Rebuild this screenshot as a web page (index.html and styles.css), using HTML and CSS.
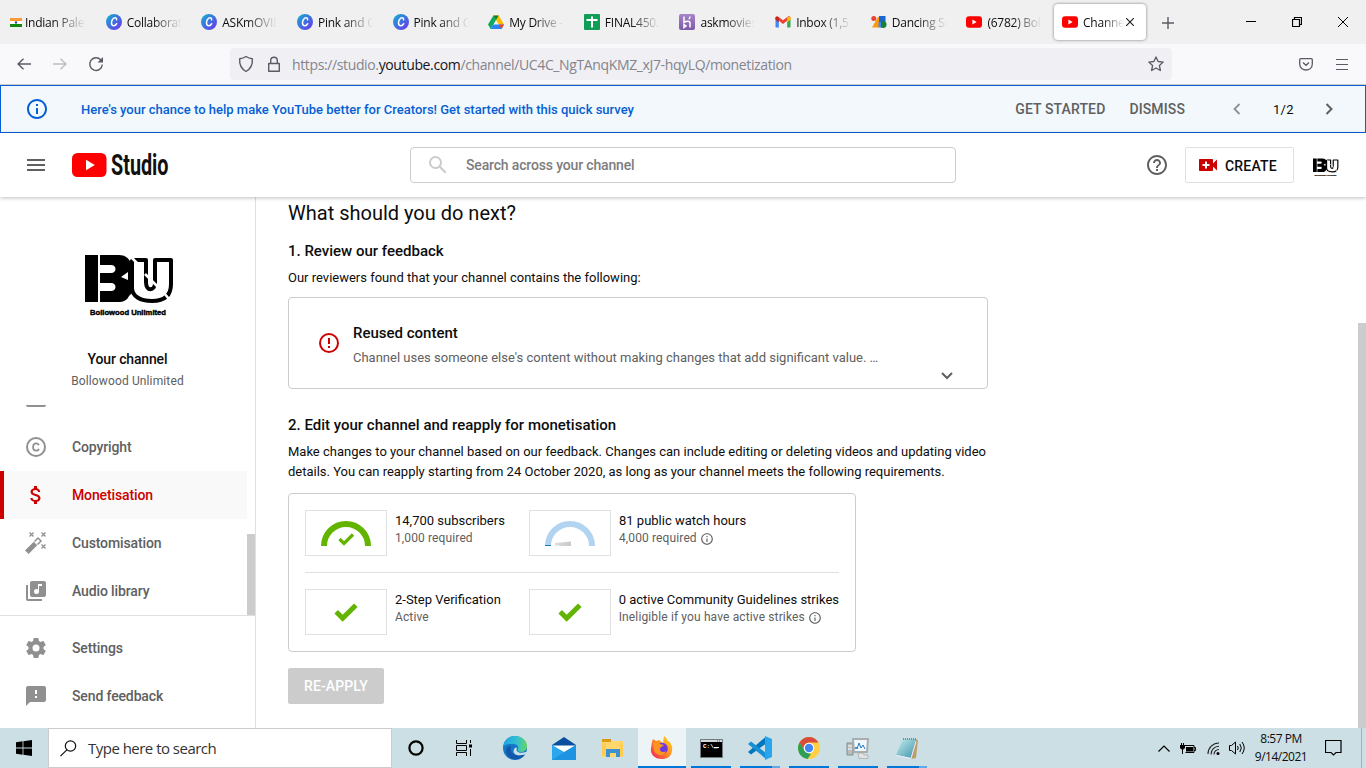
FILE: index.html
```html
<!DOCTYPE html>
<html lang="en">
<head>
<meta charset="utf-8">
<title>Channel monetisation - YouTube Studio</title>
<link rel="stylesheet" href="styles.css">
</head>
<body>
<svg class="defs" width="0" height="0">
  <defs>
    <linearGradient id="canva" x1="0" y1="0" x2="1" y2="1"><stop offset="0" stop-color="#12b5cc"/><stop offset=".5" stop-color="#3f6fe0"/><stop offset="1" stop-color="#7435e8"/></linearGradient>
    <linearGradient id="edge" x1="0" y1="0" x2="1" y2="0"><stop offset="0" stop-color="#1ba3e4"/><stop offset=".6" stop-color="#35c1d0"/><stop offset="1" stop-color="#66d85b"/></linearGradient>
    <linearGradient id="fire" x1="1" y1="0" x2="0" y2="1"><stop offset="0" stop-color="#ffe226"/><stop offset=".5" stop-color="#ff8a20"/><stop offset="1" stop-color="#f5156c"/></linearGradient>
    <linearGradient id="pad" x1="0" y1="0" x2="1" y2="1"><stop offset="0" stop-color="#c8eef3"/><stop offset="1" stop-color="#3d94a8"/></linearGradient>
    <linearGradient id="needle"><stop offset="0" stop-color="#dcdcdc"/><stop offset="1" stop-color="#c8c8c8"/></linearGradient>
    <linearGradient id="her" x1="0" y1="0" x2="0" y2="1"><stop offset="0" stop-color="#a785c9"/><stop offset="1" stop-color="#7d5aa6"/></linearGradient>
    <symbol id="i-canva" viewBox="0 0 16 16"><circle cx="8" cy="8" r="8" fill="url(#canva)"/><path d="M10.600 5.800c.2-1.200-.4-2-1.500-2C7.200 3.800 5.500 6.200 5.500 8.800c0 1.900.9 3 2.300 3 1.300 0 2.300-.9 2.900-2.100" fill="none" stroke="#fff" stroke-width="1.500" stroke-linecap="round"/></symbol>
    <symbol id="i-yt" viewBox="0 0 16 16"><rect y="2.300" width="16" height="11.400" rx="3" fill="#f00"/><path d="M6.400 5.500v5l4.200-2.500z" fill="#fff"/></symbol>
    <symbol id="i-info" viewBox="0 0 24 24"><path d="M11 17h2v-6h-2v6zm1-15C6.480 2 2 6.480 2 12s4.480 10 10 10 10-4.480 10-10S17.520 2 12 2zm0 18c-4.410 0-8-3.590-8-8s3.590-8 8-8 8 3.590 8 8-3.590 8-8 8zM11 9h2V7h-2v2z"/></symbol>
    <symbol id="i-check" viewBox="0 0 24 19"><path d="M2.200 8.800 8.700 15.200 21.800 2.200" fill="none" stroke="#62b400" stroke-width="5"/></symbol>
    <symbol id="i-bu" viewBox="0 0 90 64">
      <path d="M0 1h13v47H0zM15 1h19c6 0 9 3 11 6l3 4v27l-4 4c-2 4-5 6-11 6H15V37h11c6 0 6-8 0-8H15V19h11c6 0 6-8 0-8H15z"/>
      <path d="m36 23 7-5v8z" fill="#fff"/>
      <path d="M48 6h13v22c0 10 9 9 9 1V6h16v24c0 12-7 17-19 17S47 42 47 34V7z" fill="#fff" stroke="#000" stroke-width="4" stroke-linejoin="round"/>
      <path d="m45 2 7 7M60 20l13 13M79 39l5 6" stroke="#fff" stroke-width="2.600"/>
      <text x="5" y="61" textLength="76" lengthAdjust="spacingAndGlyphs" font-family="Liberation Sans, sans-serif" font-weight="700" font-size="7" stroke="#000" stroke-width=".4">Bollowood Unlimited</text>
    </symbol>
  </defs>
</svg>

<div class="tabs">
  <div class="tab first"><svg width="12" height="9" viewBox="0 0 12 9"><path fill="#f93" d="M0 0h12v3H0z"/><path fill="#fff" d="M0 3h12v3H0z"/><path fill="#138808" d="M0 6h12v3H0z"/><circle cx="6" cy="4.500" r="1.200" fill="#33489a"/></svg><span>Indian Palette</span></div>
  <div class="tab"><svg width="16" height="16"><use href="#i-canva"/></svg><span>Collaboration</span></div>
  <div class="tab"><svg width="16" height="16"><use href="#i-canva"/></svg><span>ASKmOVIES</span></div>
  <div class="tab"><svg width="16" height="16"><use href="#i-canva"/></svg><span>Pink and Cream</span></div>
  <div class="tab"><svg width="16" height="16"><use href="#i-canva"/></svg><span>Pink and Cream</span></div>
  <div class="tab"><svg width="16" height="16" viewBox="0 0 16 16"><path fill="#ffba00" d="M5.400 1.500h5.200L16 10.500h-5.200z"/><path fill="#0da960" d="M5.400 1.500 0 10.500 2.600 15 8 6z"/><path fill="#2684fc" d="M2.600 15 5.200 10.500H16L13.400 15z"/><path fill="#ea4335" d="M10.800 10.500H16l-2.600 4.500z"/><path fill="#00832d" d="m5.400 1.500 2.600 4.500 2.600-4.500z"/></svg><span>My Drive - Go</span></div>
  <div class="tab"><svg width="16" height="16" viewBox="0 0 16 16"><rect width="16" height="16" rx="1" fill="#0f9d58"/><path d="M2.500 6h11M8 2.500v11" stroke="#fff" stroke-width="2"/></svg><span>FINAL450.xls</span></div>
  <div class="tab"><svg width="16" height="16" viewBox="0 0 16 16"><rect width="16" height="16" rx="2" fill="url(#her)"/><path d="M5 2.500v6c2-1.300 6-2 6 .5v4.500M11 2.500c0 1-.4 2-1.200 2.700M5 10.500l2 1.500-2 1.500z" fill="none" stroke="#fff" stroke-width="1.500"/></svg><span>askmovies</span></div>
  <div class="tab"><svg width="16" height="16" viewBox="0 0 15 16"><path fill="#4285f4" d="M0 4h3.300v9.500H1c-.6 0-1-.4-1-1z"/><path fill="#34a853" d="M11.700 4H15v8.500c0 .6-.4 1-1 1h-2.300z"/><path fill="#ea4335" d="M0 4c0-1.700 1.800-2 2.800-1.300l4.700 3.500 4.700-3.500C13.200 2 15 2.300 15 4L7.500 10 0 4z"/><path fill="#fbbc04" d="m11.700 3.200 3.300-.5v3l-3.300 2.500z"/><path fill="#c5221f" d="m0 3 3.300.3v4.900L0 5.700z"/></svg><span>Inbox (1,531)</span></div>
  <div class="tab"><svg width="16" height="16" viewBox="0 0 16 16"><circle cx="2.800" cy="4.500" r="2.500" fill="#ea4335"/><path fill="#fb9a04" d="M1 13.500 7 3h1v10.500z"/><path fill="#1967d2" d="M8 2h6.500v6H8z"/><circle cx="12" cy="10.500" r="3.500" fill="#188038"/><path fill="#4285f4" d="M7.500 8h2.500v5.500H7.500z"/></svg><span>Dancing Script</span></div>
  <div class="tab"><svg width="16" height="16"><use href="#i-yt"/></svg><span>(6782) Bollywood</span></div>
  <div class="tab active"><svg width="16" height="16"><use href="#i-yt"/></svg><span>Channel mon</span><svg class="close" width="8" height="8" viewBox="0 0 8 8"><path d="m0 0 8 8M8 0 0 8" stroke="#222" stroke-width="1.200"/></svg></div>
  <svg class="plus" width="12" height="12" viewBox="0 0 12 12"><path d="M6 0v12M0 6h12" stroke="#5b5b66" stroke-width="1.400"/></svg>
  <div class="winbtns">
    <svg width="10" height="10"><path d="M0 4.500h10" stroke="#000"/></svg>
    <svg width="10" height="10"><path d="M.5 2.500h7v7h-7zM2.500 2.500v-2h7v7h-2" fill="none" stroke="#000" stroke-width="1.200"/></svg>
    <svg width="10" height="10"><path d="m0 0 10 10M10 0 0 10" stroke="#000"/></svg>
  </div>
</div>

<div class="toolbar">
  <svg class="nav" width="14" height="12" viewBox="0 0 14 12"><path d="M6.500.8 1 6l5.500 5.200M1 6h13" fill="none" stroke="#5b5b66" stroke-width="1.400"/></svg>
  <svg class="nav" width="14" height="12" viewBox="0 0 14 12"><path d="M7.500.8 13 6l-5.500 5.200M13 6H0" fill="none" stroke="#bdbdc3" stroke-width="1.400"/></svg>
  <svg class="nav reload" width="16" height="16" viewBox="0 0 16 16"><path d="M12.800 4A6.300 6.300 0 1 0 14.300 8.500" fill="none" stroke="#5b5b66" stroke-width="1.400"/><path d="M15 1v5.500H9.500z" fill="#5b5b66"/></svg>
  <div class="url">
    <svg width="16" height="18" viewBox="0 0 16 18"><path d="M8 1.500c2 1.300 4 2 6.300 2.300.5 5.500-1 9.700-6.300 12.700C2.700 13.500 1.200 9.300 1.700 3.800 4 3.500 6 2.800 8 1.500z" fill="none" stroke="#5b5b66" stroke-width="1.400" stroke-linejoin="round"/></svg>
    <svg width="12" height="16" viewBox="0 0 12 16"><path d="M.7 7.500h10.600v7.800H.7zM2.700 7.500v-3a3.300 3.300 0 0 1 6.600 0v3" fill="none" stroke="#5b5b66" stroke-width="1.400" stroke-linejoin="round"/></svg>
    <p>https://studio.<b>youtube.com</b>/channel/UC4C_NgTAnqKMZ_xJ7-hqyLQ/monetization</p>
    <svg width="16" height="16" viewBox="0 0 16 16"><path d="m8 .9 2.100 4.600 5.100.6-3.800 3.400 1 5L8 12l-4.400 2.500 1-5L.8 6.100l5.100-.6z" fill="none" stroke="#5b5b66" stroke-width="1.300" stroke-linejoin="round"/></svg>
  </div>
  <svg class="pocket" width="14" height="13" viewBox="0 0 14 13"><path d="M1.700.7h10.600c.6 0 1 .4 1 1V6c0 8-12.600 8-12.600 0V1.700c0-.6.4-1 1-1zM4 4.500l3 2.800 3-2.800" fill="none" stroke="#5b5b66" stroke-width="1.300"/></svg>
  <svg width="12" height="11" viewBox="0 0 12 11"><path d="M0 .5h12M0 5.500h12M0 10.500h12" stroke="#5b5b66" stroke-width="1.200"/></svg>
</div>

<div class="banner">
  <svg class="binfo" width="24" height="24" fill="#065fd4"><use href="#i-info"/></svg>
  <p>Here's your chance to help make YouTube better for Creators! Get started with this quick survey</p>
  <a class="get">GET STARTED</a><a class="dismiss">DISMISS</a>
  <svg width="8" height="12" viewBox="0 0 8 12"><path d="M6.500 1 1.500 6l5 5" fill="none" stroke="#909090" stroke-width="1.800"/></svg>
  <span>1/2</span>
  <svg width="8" height="12" viewBox="0 0 8 12"><path d="m1.500 1 5 5-5 5" fill="none" stroke="#606060" stroke-width="2"/></svg>
</div>

<header class="header">
  <svg width="18" height="12" viewBox="0 0 18 12"><path d="M0 1h18M0 6h18M0 11h18" stroke="#606060" stroke-width="2"/></svg>
  <svg class="logo" width="98" height="28" viewBox="0 0 98 28"><rect y="2" width="34.500" height="24" rx="5.500" fill="#f00"/><path d="M14 8.800v10.400l8.800-5.200z" fill="#fff"/><text x="39" y="24" textLength="57.500" lengthAdjust="spacingAndGlyphs" font-family="Roboto, sans-serif" font-weight="700" font-size="29" fill="#111">Studio</text></svg>
  <div class="search"><svg width="24" height="24" viewBox="0 0 24 24"><path fill="#ccc" d="M20.490 19l-5.730-5.730C15.530 12.200 16 10.910 16 9.500A6.500 6.500 0 1 0 9.500 16c1.410 0 2.700-.47 3.770-1.240L19 20.490 20.490 19zM5 9.500C5 7.010 7.010 5 9.500 5S14 7.010 14 9.500 11.990 14 9.500 14 5 11.990 5 9.500z"/></svg><span>Search across your channel</span></div>
  <svg class="help" width="24" height="24" viewBox="0 0 24 24"><path fill="#606060" d="M11 18h2v-2h-2v2zm1-16C6.480 2 2 6.480 2 12s4.480 10 10 10 10-4.480 10-10S17.520 2 12 2zm0 18c-4.410 0-8-3.590-8-8s3.590-8 8-8 8 3.590 8 8-3.590 8-8 8zm0-14c-2.210 0-4 1.790-4 4h2c0-1.100.9-2 2-2s2 .9 2 2c0 2-3 1.750-3 5h2c0-2.250 3-2.500 3-5 0-2.210-1.790-4-4-4z"/></svg>
  <div class="create"><svg width="18" height="12" viewBox="0 0 18 12"><path fill="#c00" d="M1 0h12c.6 0 1 .4 1 1v3.500L18 .5v11l-4-4V11c0 .6-.4 1-1 1H1c-.6 0-1-.4-1-1V1c0-.6.4-1 1-1z"/><path d="M7 2.500v7M3.500 6h7" stroke="#fff" stroke-width="2"/></svg><span>CREATE</span></div>
  <svg class="avatar" width="26" height="19"><use href="#i-bu"/></svg>
</header>

<div class="body">
  <nav class="side">
    <div class="channel">
      <svg width="90" height="64"><use href="#i-bu"/></svg>
      <strong>Your channel</strong>
      <span>Bollowood Unlimited</span>
    </div>
    <div class="cut"></div>
    <div class="item"><svg width="24" height="24" viewBox="0 0 24 24"><circle cx="12" cy="12" r="9" fill="none" stroke="#909090" stroke-width="2"/><path d="M14.800 10.300c-.3-1.300-1.300-2-2.700-2-1.900 0-3 1.400-3 3.700s1.100 3.700 3 3.700c1.400 0 2.400-.7 2.700-2" fill="none" stroke="#909090" stroke-width="1.800"/></svg>Copyright</div>
    <div class="item on"><svg width="24" height="24" viewBox="0 0 24 24"><path fill="#c00" d="M11.800 10.900c-2.270-.59-3-1.200-3-2.150 0-1.090 1.010-1.850 2.700-1.850 1.780 0 2.440.85 2.500 2.100h2.210c-.07-1.720-1.120-3.300-3.210-3.810V3h-3v2.160c-1.940.42-3.500 1.680-3.500 3.610 0 2.310 1.910 3.460 4.700 4.130 2.500.6 3 1.480 3 2.410 0 .69-.49 1.790-2.700 1.790-2.060 0-2.870-.92-2.980-2.100H6.320c.12 2.190 1.760 3.420 3.680 3.830V21h3v-2.150c1.950-.37 3.500-1.500 3.500-3.550 0-2.840-2.430-3.810-4.700-4.400z"/></svg>Monetisation</div>
    <div class="item"><svg width="24" height="24" viewBox="0 0 24 24"><path d="M2.800 21.200 11.500 12.500" stroke="#909090" stroke-width="5"/><path d="m10.500 10.500 3.500-3.500 3 3-3.500 3.500" fill="none" stroke="#909090" stroke-width="1.500"/><path d="m5.500 1.500 4 4m0-4-4 4m12-4 4 4m0-4-4 4m0 8 4 4m0-4-4 4" stroke="#909090" stroke-width="1.300"/></svg>Customisation</div>
    <div class="item"><svg width="24" height="24" viewBox="0 0 24 24"><path fill="#909090" d="M20 2H8c-1.100 0-2 .9-2 2v12c0 1.100.9 2 2 2h12c1.100 0 2-.9 2-2V4c0-1.100-.9-2-2-2zm-2 5h-3v5.500a2.500 2.500 0 1 1-2.500-2.500c.57 0 1.080.19 1.500.51V5h4v2zM4 6H2v14c0 1.100.9 2 2 2h14v-2H4V6z"/></svg>Audio library</div>
    <div class="foot">
    <div class="item"><svg width="24" height="24" viewBox="0 0 24 24"><path fill="#909090" fill-rule="evenodd" d="M19.430 12.980c.04-.32.070-.64.070-.98s-.03-.66-.07-.98l2.110-1.650c.19-.15.240-.42.120-.64l-2-3.460c-.12-.22-.39-.3-.61-.22l-2.490 1c-.52-.4-1.080-.73-1.690-.98l-.38-2.650C14.460 2.180 14.250 2 14 2h-4c-.25 0-.46.180-.49.42l-.38 2.650c-.61.25-1.170.59-1.690.98l-2.490-1c-.23-.09-.49 0-.61.22l-2 3.460c-.13.22-.07.49.120.64l2.110 1.650c-.04.32-.07.650-.07.98s.03.660.070.980l-2.110 1.650c-.19.150-.24.420-.12.640l2 3.460c.12.220.39.300.61.220l2.490-1c.52.400 1.080.730 1.690.980l.38 2.650c.03.240.24.420.49.420h4c.25 0 .46-.18.490-.42l.38-2.650c.61-.25 1.170-.59 1.690-.98l2.490 1c.23.090.49 0 .61-.22l2-3.460c.12-.22.070-.49-.12-.64l-2.110-1.650zM12 15.500a3.500 3.500 0 1 1 0-7 3.500 3.500 0 0 1 0 7z"/></svg>Settings</div>
    <div class="item"><svg width="24" height="24" viewBox="0 0 24 24"><path fill="#909090" d="M20 2H4c-1.100 0-2 .9-2 2v18l4-4h14c1.100 0 2-.9 2-2V4c0-1.100-.9-2-2-2zm-7 12h-2v-2h2v2zm0-4h-2V6h2v4z"/></svg>Send feedback</div>
    </div>
    <div class="sidescroll"></div>
  </nav>
  <main class="main">
    <h1>What should you do next?</h1>
    <h2>1. Review our feedback</h2>
    <p class="intro">Our reviewers found that your channel contains the following:</p>
    <section class="reused">
      <svg width="24" height="24" viewBox="0 0 24 24"><circle cx="12" cy="12" r="9" fill="none" stroke="#c00" stroke-width="2"/><path d="M12 7v6M12 15v2" stroke="#c00" stroke-width="2"/></svg>
      <div><h3>Reused content</h3><p>Channel uses someone else's content without making changes that add significant value. …</p></div>
      <svg class="chev" width="12" height="8" viewBox="0 0 12 8"><path d="m1 1 5 5 5-5" fill="none" stroke="#606060" stroke-width="2"/></svg>
    </section>
    <h2 class="second">2. Edit your channel and reapply for monetisation</h2>
    <p class="para">Make changes to your channel based on our feedback. Changes can include editing or deleting videos and updating video<br><span>details. You can reapply starting from 24 October 2020, as long as your channel meets the following requirements.</span></p>
    <section class="reqs">
      <div class="row">
        <div class="box"><svg width="50" height="25" viewBox="0 0 50 25"><path d="M3 25a22 22 0 0 1 44 0" fill="none" stroke="#62b400" stroke-width="6"/><path d="m18.500 18 4.500 4.500 9-9" fill="none" stroke="#62b400" stroke-width="3.200"/></svg></div>
        <div class="label l1"><b>14,700 subscribers</b><i>1,000 required</i></div>
        <div class="box"><svg width="50" height="25" viewBox="0 0 50 25"><path d="M3 25a22 22 0 0 1 44 0" fill="none" stroke="#b2d4f0" stroke-width="6"/><path d="M0 24.500h6" stroke="#167ac6"/><path d="M10 22 26 20.500v5.500l-16-1.700z" fill="url(#needle)"/></svg></div>
        <div class="label"><b>81 public watch hours</b><i>4,000 required<svg width="14" height="14" fill="#606060"><use href="#i-info"/></svg></i></div>
      </div>
      <div class="row">
        <div class="box"><svg width="24" height="19"><use href="#i-check"/></svg></div>
        <div class="label l1"><b>2-Step Verification</b><i>Active</i></div>
        <div class="box"><svg width="24" height="19"><use href="#i-check"/></svg></div>
        <div class="label"><b>0 active Community Guidelines strikes</b><i class="wide">Ineligible if you have active strikes<svg width="14" height="14" fill="#606060"><use href="#i-info"/></svg></i></div>
      </div>
    </section>
    <div class="reapply">RE-APPLY</div>
  </main>
  <div class="pagescroll"></div>
</div>

<footer class="taskbar">
  <div class="start"><svg width="16" height="16" viewBox="0 0 16 16"><path d="M0 2.200 6.600 1.300v6.300H0zM7.400 1.200 16 0v7.600H7.400zM0 8.400h6.600v6.300L0 13.800zM7.400 8.400H16V16l-8.600-1.200z"/></svg></div>
  <div class="tsearch"><svg width="17" height="17" viewBox="0 0 17 17"><circle cx="10.500" cy="6" r="5.200" fill="none" stroke="#111" stroke-width="1.200"/><path d="M6.800 9.800.5 16.200" stroke="#111" stroke-width="1.200"/></svg><span>Type here to search</span></div>
  <div class="sys"><svg width="16" height="16"><circle cx="8" cy="8" r="6.600" fill="none" stroke="#000" stroke-width="2.200"/></svg></div>
  <div class="sys"><svg width="16" height="16"><path d="M.5 0v3.500h10V0M.5 16v-3.500h10V16M.5 5.500h10v5H.5zM14.500 0v3M14.500 9v7" fill="none" stroke="#000"/><path d="M13 4.500h3v3h-3z"/></svg></div>
  <div class="apps">
    <div class="app"><svg width="24" height="24" viewBox="0 0 24 24"><circle cx="12" cy="12" r="12" fill="#1478c9"/><path d="M0 11C1 4 6 0 12 0c7 0 12 5 12 10 0 4-3 6-6 6-3 0-4-1-3-3 1-3-1-5-5-5-4 0-8 0-10 3z" fill="url(#edge)"/><path d="M8 10c-2 8 5 12 14 8-4 7-16 8-19-2C3 12 5 10 8 10z" fill="#1257a8"/><path d="M14 12c-2 4 3 6 9 4l1 1-2 1.500c-7 2-13 0-11-5 .6-1.500 2-2.500 3-1.500z" fill="#cbdfe5"/></svg></div>
    <div class="app"><svg width="24" height="23" viewBox="0 0 24 23"><path d="M0 8 12 0l12 8v4H0z" fill="#0a4f9e"/><path d="M1 8.500h22v5L12 17 1 13.500z" fill="#fff"/><path d="M0 8v15h24V8L12 15z" fill="#2ba8ed"/><path d="m0 23 24-15v15z" fill="#1d93e2"/></svg></div>
    <div class="app"><svg width="22" height="20" viewBox="0 0 22 20"><path d="M0 1h8l2 2h11v16H0z" fill="#ffd76b"/><path d="M0 1h9v3H0z" fill="#dc9b12"/><path d="M4 19v-8h14v8h-4v-4H8v4z" fill="#3c91ce"/><path d="M0 5h4v13H0zM18 5h3v13h-3z" fill="#ffcd52"/></svg></div>
    <div class="app current"><svg width="24" height="24" viewBox="0 0 24 24"><path d="M2 6 3 3l3 2 3-1 4 3 1-7c2 1 3 3 4 5 3 1 5 6 4 10-1 6-5 8-10 8C4 23 0 18 1 12z" fill="url(#fire)"/><circle cx="12" cy="12.500" r="5.800" fill="#7038dc"/><path d="M3 7c4-2 6-1 7 1l4 1-4 3c-1 4 4 5 6 3-1 6-11 5-12-1z" fill="#ff9420"/></svg></div>
    <div class="app run"><svg width="23" height="19" viewBox="0 0 23 19"><path d="M.5.500h22v18H.5z" fill="#000" stroke="#737b80"/><path d="M1 1h21v2H1z" fill="#d3d8da"/><path d="M17 2h1M19 2h1" stroke="#555"/><text x="3" y="9" font-family="Liberation Mono, monospace" font-weight="700" font-size="6" fill="#fff">C:\_</text><path d="M14 8.500h5" stroke="#fff"/></svg></div>
    <div class="app run more"><svg width="24" height="24" viewBox="0 0 24 24"><path d="M17.500 1v7L3 18.500 0 16z" fill="#0076bd"/><path d="M0 8 3 5.500 18 17v6z" fill="#168fd6"/><path d="m17 0 7 3v18l-7 3z" fill="#29a5ed"/></svg></div>
    <div class="app run"><svg width="24" height="24" viewBox="0 0 24 24"><circle cx="12" cy="12" r="11" fill="#ffcf43"/><path d="M2.500 6.500A11 11 0 0 1 21.500 6.500H12A5.500 5.500 0 0 0 7 14z" fill="#d84b3d"/><path d="M2.500 6.500 8 15l4 2.500 2 .5-3.500 5A11 11 0 0 1 2.500 6.500z" fill="#2f9f56"/><circle cx="12" cy="12" r="5.300" fill="#fff"/><circle cx="12" cy="12" r="4.200" fill="#4285f4"/></svg></div>
    <div class="app run"><svg width="24" height="21" viewBox="0 0 24 21"><path d="M1 5h6v12H1z" fill="#b9bdbd" stroke="#858b8b"/><path d="M2 8h4M2 11h4" stroke="#fff"/><path d="M7 1h15l-1 13H8z" fill="#eff9ff" stroke="#a9adad" stroke-width="2"/><path d="M9 11l1-2 1 2 2-6 2 5 2-3 2 4" fill="none" stroke="#267bc2"/><path d="M12 15h5l1 2h4v3.500h-9z" fill="#e2e3e0" stroke="#a5a8a5" stroke-width=".7"/></svg></div>
    <div class="app run more"><svg width="24" height="23" viewBox="0 0 24 23"><path d="m20 2 3 1-2 18-5 1z" fill="#bd9e66"/><path d="M8 2h13l-5 19-15-3z" fill="url(#pad)"/><path d="m1 18.500 15 3 5-17" fill="none" stroke="#eef" stroke-width="1"/><path d="M8 2h13" stroke="#888" stroke-dasharray="1 1" stroke-width="2"/></svg></div>
  </div>
  <div class="tray">
    <svg class="up" width="12" height="7" viewBox="0 0 12 7"><path d="m.5 6.500 5.500-5.500 5.500 5.500" fill="none" stroke="#000" stroke-width="1.200"/></svg>
    <svg class="battery" width="16" height="11" viewBox="0 0 16 11"><path d="M4.500 2.500h9.500v7H5.500M14 4.500h1.500v3H14" fill="none" stroke="#000"/><path d="M6 4h7v4.500H6zM0 2h5v3.500H4L3 7H2L1 5.500H0zM1 0h1v2H1zM3 0h1v2H3zM2 6h1v5H2z"/></svg>
    <svg class="wifi" width="14" height="13" viewBox="0 0 14 13"><path d="M1 12A11 11 0 0 1 12 1M4 12.500A8 8 0 0 1 12 4.300M7 12.500a5 5 0 0 1 5-5" fill="none" stroke="#222" stroke-width="1.100"/><circle cx="11" cy="11.500" r="1.500"/></svg>
    <svg class="sound" width="17" height="14" viewBox="0 0 17 14"><path d="M.5 4.500h2l4-3.500v12l-4-3.500h-2zM8.500 5q1.500 2 0 4M10.800 3q3 4 0 8M13 1q4.500 6 0 12" fill="none" stroke="#000"/></svg>
    <div class="clock"><span>8:57 PM</span><span>9/14/2021</span></div>
    <svg class="note" width="17" height="16" viewBox="0 0 17 16"><path d="M.5.500h15.500v12h-5L8.500 15 6 12.500H.5z" fill="none" stroke="#000" stroke-width="1.200"/></svg>
    <div class="peek"></div>
  </div>
</footer>
</body>
</html>
```
FILE: styles.css
```css
* { box-sizing: border-box; }
body { margin: 0; width: 1366px; height: 768px; overflow: hidden; display: flex; flex-direction: column; background: #fff; font-family: Roboto, sans-serif; color: #0d0d0d; }
p, h1, h2, h3 { margin: 0; white-space: nowrap; }
svg { flex: none; display: block; }
.defs { position: absolute; }

.tabs { height: 44px; flex: none; display: flex; align-items: center; background: #f0f0f0; font: 12px "Open Sans", sans-serif; letter-spacing: -.25px; }
.tab { width: 95.650px; height: 44px; padding-left: 10px; display: flex; align-items: center; gap: 5px; flex: none; }
.tab span { width: 56px; height: 20px; margin-top: 2px; line-height: 20px; overflow: hidden; white-space: nowrap; -webkit-mask-image: linear-gradient(90deg, #000 45%, transparent 98%); mask-image: linear-gradient(90deg, #000 45%, transparent 98%); }
.first { gap: 3px; }
.first span { width: 62px; }
.tab.active { width: 92px; height: 36px; margin: 0 2px; padding-left: 8px; background: #fff; border-radius: 4px; box-shadow: 0 0 3px rgba(0, 0, 0, .5); }
.active span { width: 42px; }
.close { margin-left: -4px; }
.plus { margin: 1px 0 0 14px; }
.winbtns { display: flex; gap: 36px; margin-left: auto; padding-right: 18px; }

.toolbar { height: 41px; flex: none; display: flex; align-items: center; background: #f9f9fb; border-bottom: 1px solid #ccc; padding-left: 17px; }
.nav { margin-right: 22px; }
.nav.reload { margin-left: -1px; }
.url { display: flex; align-items: center; width: 942px; height: 32px; margin-left: 104px; padding: 0 8px; background: #f0f0f4; border-radius: 4px; }
.url svg + svg { margin-left: 14px; }
.url p { margin: 1px 0 0 12px; flex: 1; font: 14px "Open Sans", sans-serif; letter-spacing: -.37px; color: #84848c; }
.url b { font-weight: 400; color: #15141a; }
.pocket { margin: 0 23px 0 127px; }

.banner { height: 48px; flex: none; display: flex; align-items: center; border: 1px solid #065fd4; background: #f2f8fc; padding: 0 32px 0 24px; font-weight: 500; }
.banner p { margin-left: 32px; flex: 1; font-size: 13px; color: #065fd4; }
.banner a { font-size: 14px; color: #606060; letter-spacing: .12px; }
.banner .dismiss { margin: 0 48px 0 24px; }
.banner span { width: 20px; margin: 0 32px; font-size: 13px; font-weight: 400; letter-spacing: .3px; white-space: nowrap; }

.header { height: 64px; flex: none; position: relative; z-index: 2; display: flex; align-items: center; padding: 0 26px 0 27px; background: #fff; box-shadow: 0 1px 4px rgba(0, 0, 0, .25); }
.logo { margin-left: 27px; }
.search { display: flex; align-items: center; width: 546px; height: 36px; margin-left: 240px; padding-left: 15px; gap: 16px; border: 1px solid #ccc; border-radius: 4px; font-size: 14px; color: #7d7d7d; font-weight: 500; letter-spacing: -.16px; }
.help { margin-left: 189px; }
.create { display: flex; align-items: center; gap: 8px; width: 109px; height: 36px; margin-left: 16px; padding-left: 13px; border: 1px solid #e0e0e0; border-radius: 2px; font-size: 14px; font-weight: 500; letter-spacing: .2px; }
.create span { margin-top: 2px; }
.avatar { margin-left: 19px; margin-top: 4px; }

.body { flex: 1; min-height: 0; display: flex; position: relative; }
.side { width: 256px; flex: none; border-right: 1px solid #e0e0e0; position: relative; color: #606060; }
.channel { height: 208px; padding: 57px 0 0; display: flex; flex-direction: column; align-items: center; }
.channel svg { margin-left: 5px; }
.channel strong { margin-top: 33px; font-size: 14px; line-height: 16px; font-weight: 500; letter-spacing: -.15px; color: #0d0d0d; }
.channel span { margin-top: 6px; font-size: 12px; line-height: 16px; letter-spacing: .13px; }
.cut { width: 20px; height: 2px; margin: 0 0 16px 26px; border-radius: 0 0 2px 2px; background: #909090; }
.item { display: flex; align-items: center; height: 48px; padding-left: 24px; gap: 24px; font-size: 14px; font-weight: 500; letter-spacing: -.13px; }
.item.on { width: 247px; padding-left: 20px; border-left: 4px solid #c00; background: #f9f9f9; color: #c00; }
.foot { border-top: 1px solid #e0e0e0; padding-top: 8px; }
.sidescroll { position: absolute; right: 0; top: 337px; width: 8px; height: 81px; background: #ccc; }
.pagescroll { position: absolute; right: 0; top: 126px; width: 8px; height: 405px; background: #ccc; }

.main { padding-left: 32px; font-size: 13px; }
.main h1 { margin-top: 4px; font-size: 20px; line-height: 24px; font-weight: 400; }
.main h2 { margin-top: 16px; font-size: 15px; line-height: 20px; font-weight: 500; }
.intro { margin-top: 7px; line-height: 20px; }
.reused { width: 700px; height: 92px; margin-top: 9px; padding: 25px 34px 0 28px; display: flex; border: 1px solid #ccc; border-radius: 4px; }
.reused > svg:first-child { margin-top: 8px; }
.reused div { margin-left: 12px; flex: 1; }
.reused h3 { font-size: 15px; line-height: 20px; font-weight: 500; }
.reused p { margin-top: 5px; line-height: 20px; color: #606060; }
.chev { margin-top: 49px; }
.main .second { margin-top: 26px; }
.para { margin-top: 7px; line-height: 20px; letter-spacing: -.005px; }
.reqs { width: 568px; height: 159px; margin-top: 11px; padding: 16px; border: 1px solid #ccc; border-radius: 4px; }
.row { display: flex; }
.row + .row { margin-top: 16px; padding-top: 16px; border-top: 1px solid #e0e0e0; }
.box { width: 82px; height: 46px; flex: none; display: flex; align-items: center; justify-content: center; border: 1px solid #e0e0e0; }
.label { padding: 2px 0 0 8px; white-space: nowrap; }
.l1 { width: 142px; }
.label b { display: block; font-weight: 400; line-height: 18px; }
.label i { display: flex; align-items: center; gap: 3px; height: 16px; font-style: normal; font-size: 12px; color: #606060; letter-spacing: .12px; }
.label .wide { letter-spacing: .13px; }
.label svg { margin-top: 1px; }
.reapply { width: 96px; height: 36px; margin-top: 16px; border-radius: 2px; background: #ccc; color: #fff; text-align: center; line-height: 37px; font-size: 14px; font-weight: 500; letter-spacing: .1px; }

.taskbar { height: 40px; flex: none; display: flex; background: #cbdfe5; font-family: "Open Sans", sans-serif; }
.start, .sys { width: 48px; display: flex; align-items: center; justify-content: center; }
.tsearch { width: 344px; display: flex; align-items: center; gap: 11px; padding-left: 11px; background: #fff; border: 1px solid #ccc; font-size: 15px; letter-spacing: -.52px; color: #333; }
.apps { display: flex; margin-left: 3px; }
.app { width: 49px; position: relative; display: flex; align-items: center; justify-content: center; padding-right: 1px; }
.current { width: 48px; margin-right: 1px; background: #edf4f6; border-bottom: 2px solid #0078d7; padding-top: 2px; }
.run::after { content: ""; position: absolute; left: 4px; bottom: 0; width: 40px; height: 2px; background: #0078d7; }
.more::after { background: linear-gradient(90deg, #0078d7 80%, #62a9e4 80%); }
.tray { margin-left: auto; display: flex; align-items: center; }
.battery { margin-left: 10px; }
.wifi { margin-left: 11px; }
.sound { margin-left: 8px; }
.clock { display: flex; flex-direction: column; align-items: center; width: 54px; margin-left: 8px; font-size: 12px; line-height: 18px; letter-spacing: -.5px; white-space: nowrap; }
.note { margin-left: 17px; }
.peek { width: 5px; height: 40px; margin-left: 19px; border-left: 1px solid #9fb0b6; }
```
